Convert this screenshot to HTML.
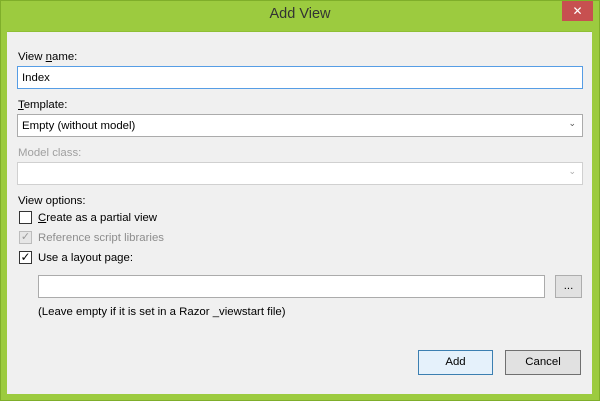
<!DOCTYPE html>
<html><head><style>
body{margin:0;width:600px;height:401px;overflow:hidden;font-family:"Segoe UI","Liberation Sans",sans-serif;font-size:11.4px;color:#000}
.win{position:absolute;left:0;top:0;width:598px;height:399px;background:#9ccb3f;border:1px solid #7fae2a}
.title{position:absolute;left:0;right:0;top:5px;text-align:center;font-size:14.5px;color:#333}
.close{position:absolute;left:561px;top:0;width:31px;height:20px;background:#c75050;color:#fff;text-align:center;font-size:12px;line-height:20px}
.client{position:absolute;left:7px;top:31px;width:585px;height:362px;background:#f0f0f0;border-top:1px solid #8fbf35}
.a{position:absolute}
.lbl{position:absolute;left:18px}
.box{position:absolute;background:#fff;border:1px solid #ababab;box-sizing:border-box}
.btn{position:absolute;background:#e1e1e1;border:1px solid #adadad;box-sizing:border-box;text-align:center;line-height:23px}
.cb{position:absolute;left:19px;width:13px;height:13px;border:1px solid #333;background:#fff;box-sizing:border-box}
u{text-decoration:underline}
</style></head><body>
<div class="win">
<div class="title">Add View</div>
<div class="close">✕</div>
</div>
<div class="client"></div>
<div class="lbl" style="top:51px">View <u>n</u>ame:</div>
<div class="box" style="left:17px;top:66px;width:566px;height:23px;border-color:#569de5;padding:5px 4px">Index</div>
<div class="lbl" style="top:99px"><u>T</u>emplate:</div>
<div class="box" style="left:17px;top:114px;width:566px;height:23px;padding:5px 4px">Empty (without model)<span style="position:absolute;right:6px;top:3px;font-size:9px;color:#555">⌄</span></div>
<div class="lbl" style="top:147px;color:#a0a0a0">Model class:</div>
<div class="box" style="left:17px;top:162px;width:566px;height:23px;border-color:#d0d0d0"><span style="position:absolute;right:6px;top:3px;font-size:9px;color:#aaa">⌄</span></div>
<div class="lbl" style="top:195px">View options:</div>
<div class="cb" style="top:211px"></div>
<div class="a" style="left:38px;top:212px"><u>C</u>reate as a partial view</div>
<div class="cb" style="top:231px;border-color:#bcbcbc;background:#e6e6e6;color:#999;font-size:11px;line-height:11px;text-align:center">✓</div>
<div class="a" style="left:38px;top:232px;color:#8d8d8d">Reference script libraries</div>
<div class="cb" style="top:251px;font-size:12px;line-height:11px;text-align:center">✓</div>
<div class="a" style="left:38px;top:252px">Use a layout page:</div>
<div class="box" style="left:38px;top:275px;width:507px;height:23px"></div>
<div class="btn" style="left:555px;top:275px;width:27px;height:23px;line-height:20px">...</div>
<div class="a" style="left:38px;top:306px">(Leave empty if it is set in a Razor _viewstart file)</div>
<div class="btn" style="left:418px;top:350px;width:75px;height:25px;border-color:#3c7fb1;background:#e5f1fb">Add</div>
<div class="btn" style="left:505px;top:350px;width:76px;height:25px;border-color:#707070">Cancel</div>
</body></html>
